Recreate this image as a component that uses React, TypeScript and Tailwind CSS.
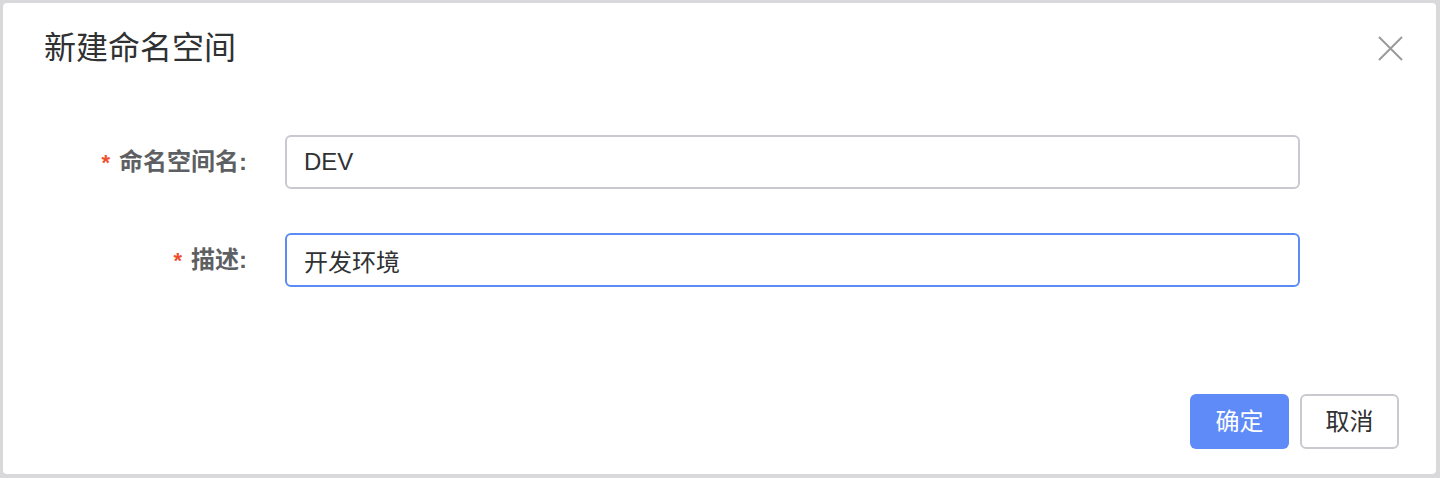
import React, { useState } from 'react';

const font = { fontFamily: '"Liberation Sans", "Noto Sans CJK SC", sans-serif' };

const Field = ({ label, value, focused, onChange }: { label: string; value: string; focused?: boolean; onChange: (v: string) => void }) => (
  <div className="flex items-center h-[54px]">
    <label className="w-[282px] pr-[38px] text-right text-[24px] font-bold text-[#5e5f63] leading-none">
      <span className="text-[#ef4f2d] mr-[9px] text-[22px]">*</span>
      {label}:
    </label>
    <input
      value={value}
      onChange={(e) => onChange(e.target.value)}
      className={`w-[1015px] h-[54px] px-[17px] text-[24px] text-[#303133] rounded-[6px] outline-none border-2 ${focused ? 'border-[#5c8bf4]' : 'border-[#c8cacf]'}`}
      style={font}
    />
  </div>
);

const App = () => {
  const [name, setName] = useState('DEV');
  const [desc, setDesc] = useState('开发环境');

  return (
    <div className="h-[478px] w-[1440px] bg-[#d9d9dc] pt-[3px] pl-[3px] pr-[4px] pb-[4px]" style={font}>
      <div className="h-full bg-white rounded-[4px] flex flex-col">
        <div className="flex items-center justify-between pt-[25px] pl-[41px] pr-[32px]">
          <h2 className="text-[32px] leading-[40px] text-[#303133]">新建命名空间</h2>
          <button className="w-[28px] h-[28px] flex items-center justify-center">
            <svg width="25" height="25" viewBox="0 0 25 25">
              <path d="M1 1 L24 24 M24 1 L1 24" stroke="#9a9a9a" strokeWidth="2" fill="none" />
            </svg>
          </button>
        </div>

        <form className="mt-[67px] flex flex-col gap-[44px]">
          <Field label="命名空间名" value={name} onChange={setName} />
          <Field label="描述" value={desc} focused onChange={setDesc} />
        </form>

        <div className="mt-auto flex justify-end gap-[11px] pr-[37px] pb-[25px]">
          <button className="w-[99px] h-[55px] rounded-[6px] bg-[#5e8bf7] text-white text-[24px]">确定</button>
          <button className="w-[99px] h-[55px] rounded-[6px] bg-white border-2 border-[#c8cacf] text-[#303133] text-[24px]">取消</button>
        </div>
      </div>
    </div>
  );
};

export default App;
